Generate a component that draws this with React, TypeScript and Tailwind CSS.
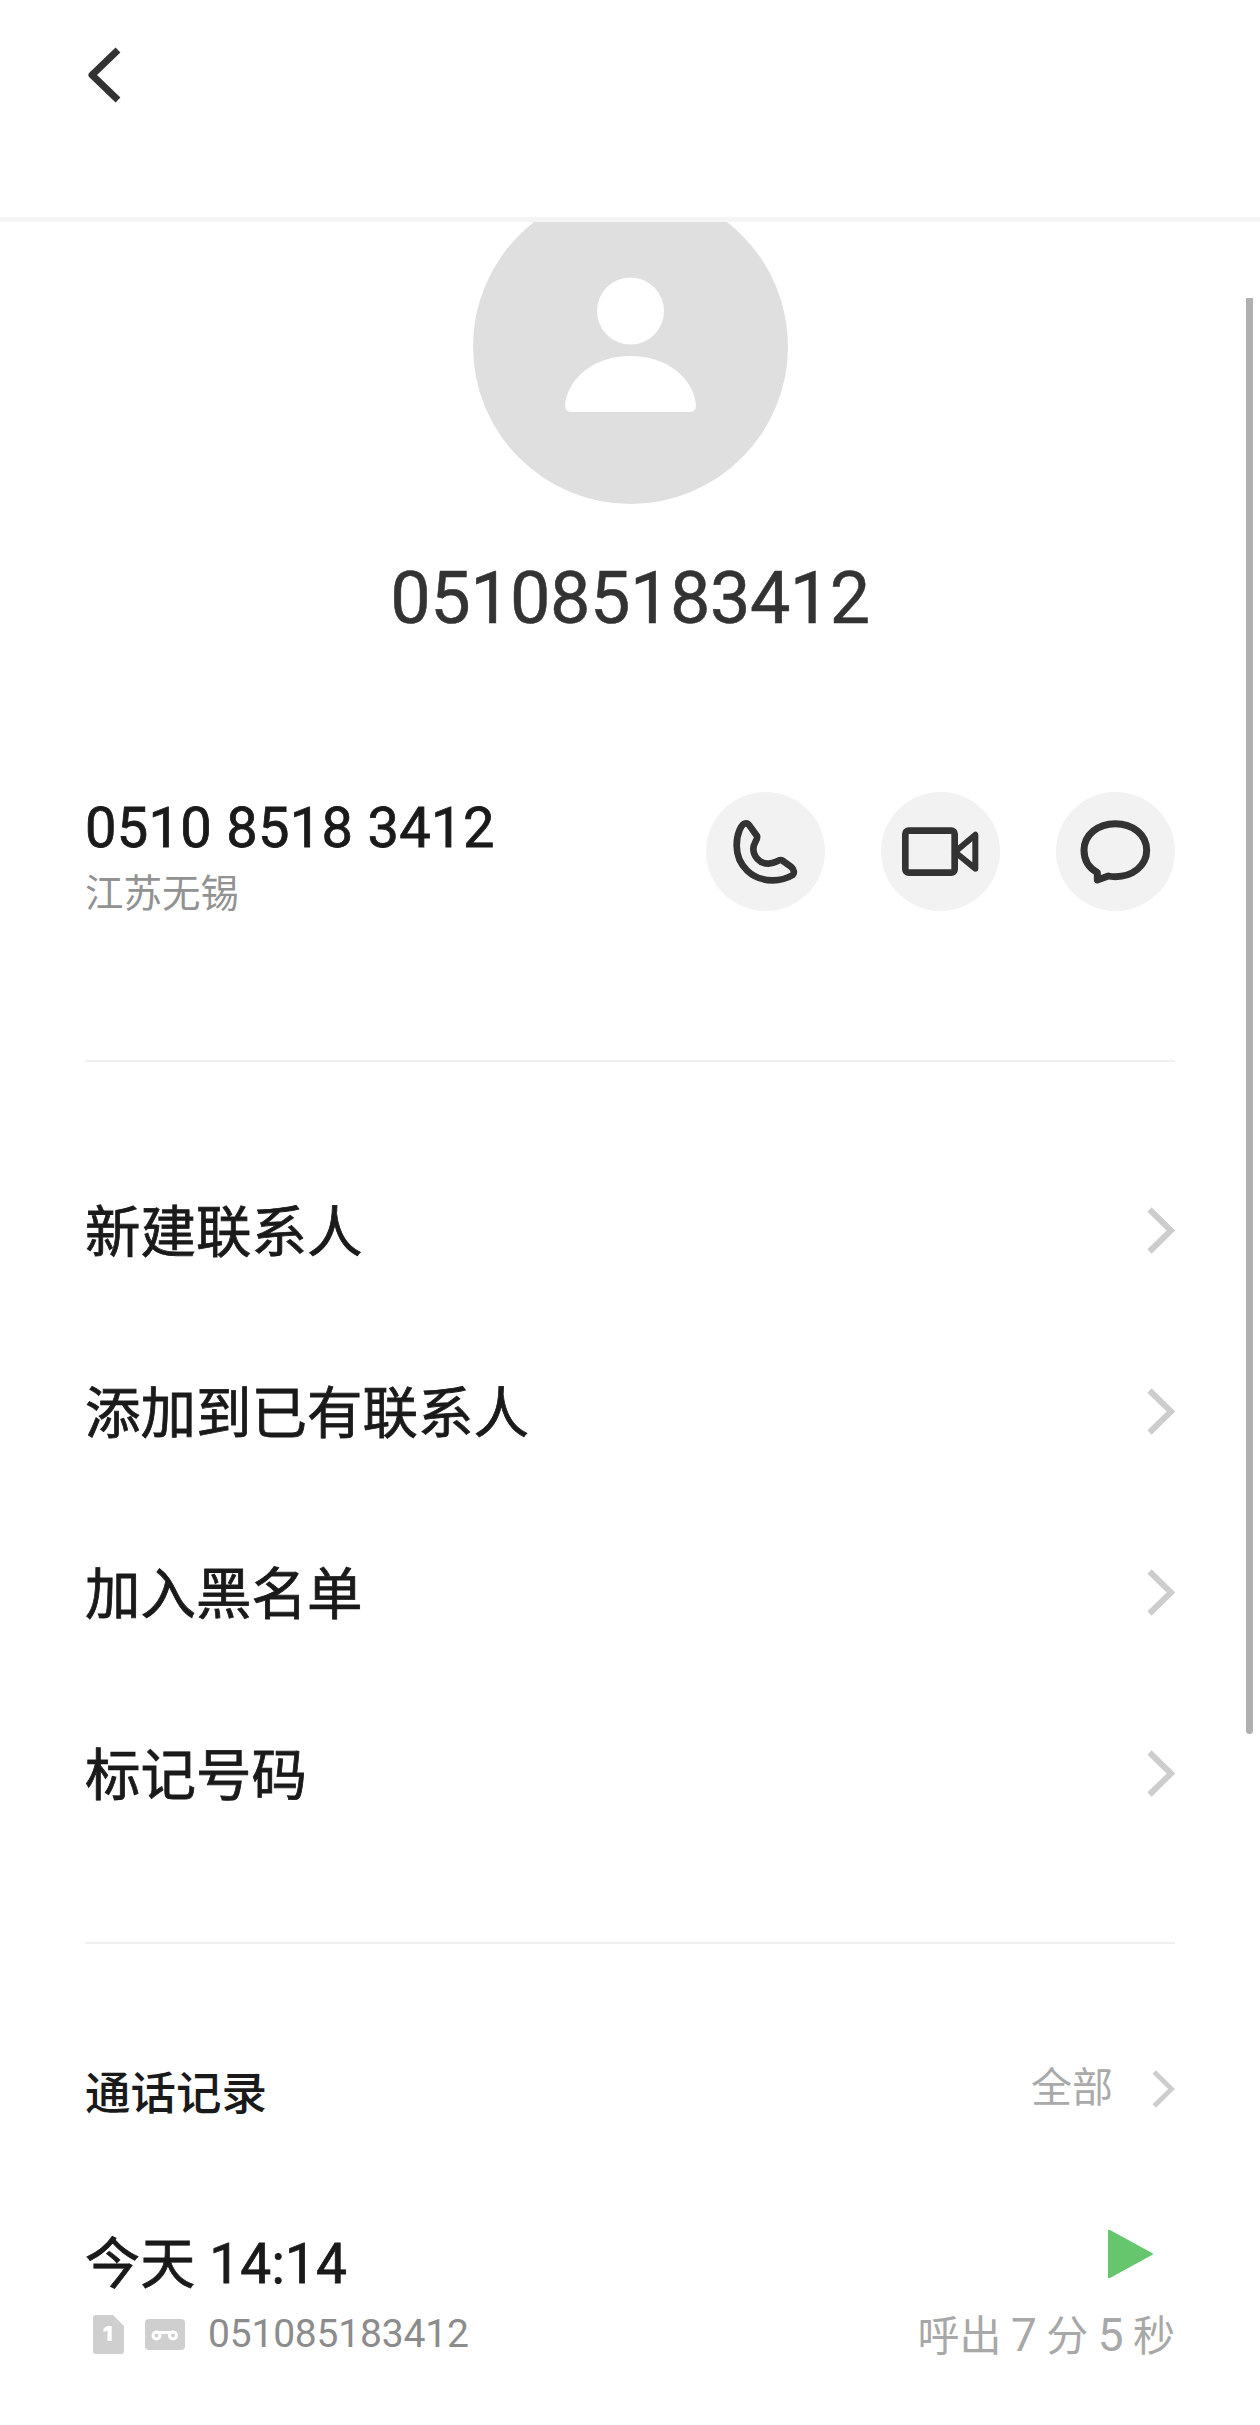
import React from 'react';

const fontStack = "[font-family:Roboto,'Noto_Sans_CJK_SC',sans-serif]";

const Chevron: React.FC<{ small?: boolean }> = ({ small }) => (
  <svg viewBox="0 0 28 47" fill="none" className={small ? 'w-[23px] h-[38px]' : 'w-[28px] h-[47px]'}>
    <path d="M2.5 2.5L24 23.5L2.5 44.5" stroke="#cdcdcd" strokeWidth="6" />
  </svg>
);

const ActionButton: React.FC<{ viewBox: string; children: React.ReactNode }> = ({ viewBox, children }) => (
  <div className="w-[119px] h-[119px] rounded-full bg-[#f2f2f2]">
    <svg viewBox={viewBox} fill="none" stroke="#333333" strokeLinejoin="round" className="w-full h-full">
      {children}
    </svg>
  </div>
);

const contactRows = ['新建联系人', '添加到已有联系人', '加入黑名单', '标记号码'];

export default function App() {
  return (
    <div className={`relative w-[1260px] h-[2425px] overflow-hidden bg-white flex flex-col ${fontStack}`}>
      <header className="h-[222px] shrink-0 border-b-[5px] border-[#f5f5f5] pl-[88px] pt-[47px]">
        <svg viewBox="0 0 34 56" fill="none" className="w-[34px] h-[56px]">
          <path d="M30 3L4 28L30 53" stroke="#333333" strokeWidth="7" strokeLinejoin="round" />
        </svg>
      </header>

      <main className="flex-1 overflow-hidden px-[85px]">
        <div className="flex flex-col items-center -mt-[33px]">
          <svg viewBox="0 0 315 315" className="w-[315px] h-[315px] shrink-0">
            <circle cx="157.5" cy="157.5" r="157.5" fill="#dfdfdf" />
            <circle cx="157.5" cy="122" r="33.5" fill="#ffffff" />
            <path
              d="M98 223Q92 223 92 216C95 188 122 167 157.5 167C193 167 220 188 223 216Q223 223 217 223Z"
              fill="#ffffff"
            />
          </svg>
          <h1 className="mt-[47px] text-[72px] leading-[96px] tracking-[-0.5px] font-normal text-[#333333] [-webkit-text-stroke:0.5px_#333333]">
            051085183412
          </h1>
        </div>

        <section className="mt-[145px] h-[119px] flex items-center justify-between">
          <div className="pt-[8px]">
            <div className="text-[56px] leading-[64px] tracking-[0.3px] text-[#1a1a1a] [-webkit-text-stroke:0.8px_#1a1a1a]">
              0510 8518 3412
            </div>
            <div className="mt-[12px] text-[38.5px] leading-[44px] text-[#929292]">江苏无锡</div>
          </div>
          <div className="flex gap-[56px]">
            <ActionButton viewBox="75 98 357 357">
              <path
                d="M195 192C180 192 167 225 167 258C167 320 215 363 275 363C300 363 322 355 335 347C342 340 338 330 330 322L303 303C295 298 285 312 262 313C235 313 217 290 217 268C217 250 232 240 228 230L205 198C202 194 199 192 195 192Z"
                strokeWidth="20"
              />
            </ActionButton>
            <ActionButton viewBox="600 98 357 357">
              <rect x="673" y="214" width="148" height="126" rx="10" strokeWidth="20" />
              <path d="M883 226V328L822 278Z" strokeWidth="18" />
            </ActionButton>
            <ActionButton viewBox="1128 98 357 357">
              <path
                d="M1252 340C1225 325 1212 300 1212 273C1212 225 1255 193 1306 193C1357 193 1400 225 1400 273C1400 320 1357 352 1306 352C1298 352 1292 352 1285 350L1252 362Z"
                strokeWidth="21"
              />
            </ActionButton>
          </div>
        </section>

        <div className="mt-[149px] h-[2px] bg-[#f0f0f0]" />

        <section className="mt-[78px]">
          {contactRows.map(row => (
            <div key={row} className="h-[181px] flex items-center justify-between text-[55.5px] text-[#1a1a1a]">
              <span className="pt-[7px] [-webkit-text-stroke:0.8px_#1a1a1a]">{row}</span>
              <Chevron />
            </div>
          ))}
        </section>

        <div className="mt-[78px] h-[2px] bg-[#f0f0f0]" />

        <section className="mt-[104px] h-[92px] flex items-center justify-between">
          <span className="mt-[3px] text-[45.5px] font-medium text-[#1a1a1a]">通话记录</span>
          <div className="mb-[10px] flex items-center gap-[39px]">
            <span className="text-[41px] text-[#aaaaaa]">全部</span>
            <Chevron small />
          </div>
        </section>

        <section className="mt-[88px] flex items-start justify-between">
          <div>
            <div className="text-[55px] leading-[72px] tracking-[0.2px] text-[#1a1a1a] [-webkit-text-stroke:0.8px_#1a1a1a]">今天 14:14</div>
            <div className="mt-[10px] flex items-center">
              <svg viewBox="0 0 31 39" className="ml-[8px] w-[31px] h-[39px]">
                <path d="M3 0H20L31 11V36Q31 39 28 39H3Q0 39 0 36V3Q0 0 3 0Z" fill="#cfcfcf" />
                <path d="M14.5 11H18.7V26H14.5V15.5L10.5 17V13.5Z" fill="#ffffff" />
              </svg>
              <svg viewBox="0 0 40 31" className="ml-[21px] w-[40px] h-[31px]">
                <rect width="40" height="31" rx="4" fill="#cfcfcf" />
                <circle cx="11.5" cy="16.5" r="3.5" fill="none" stroke="#ffffff" strokeWidth="3" />
                <circle cx="28" cy="16.5" r="3.5" fill="none" stroke="#ffffff" strokeWidth="3" />
                <path d="M11.5 13.5H28" stroke="#ffffff" strokeWidth="3" />
              </svg>
              <span className="ml-[23px] text-[39px] leading-[48px] tracking-[-0.2px] text-[#8c8c8c]">051085183412</span>
            </div>
          </div>
          <div className="flex flex-col items-end">
            <svg viewBox="0 0 46 52" className="mr-[21px] w-[46px] h-[52px]">
              <path d="M2 2L44 25Q46 26 44 27L2 50Q0 51 0 49V3Q0 1 2 2Z" fill="#66c66e" />
            </svg>
            <div className="mt-[31px] text-[42px] leading-[48px] text-[#a8a8a8] [word-spacing:-1px]">
              呼出 <span className="text-[46px]">7</span> 分 <span className="text-[46px]">5</span> 秒
            </div>
          </div>
        </section>
      </main>

      <div className="absolute left-[1246px] top-[298px] w-[7px] h-[1436px] rounded-b-[4px] bg-[#b0b0b0]" />
    </div>
  );
}
